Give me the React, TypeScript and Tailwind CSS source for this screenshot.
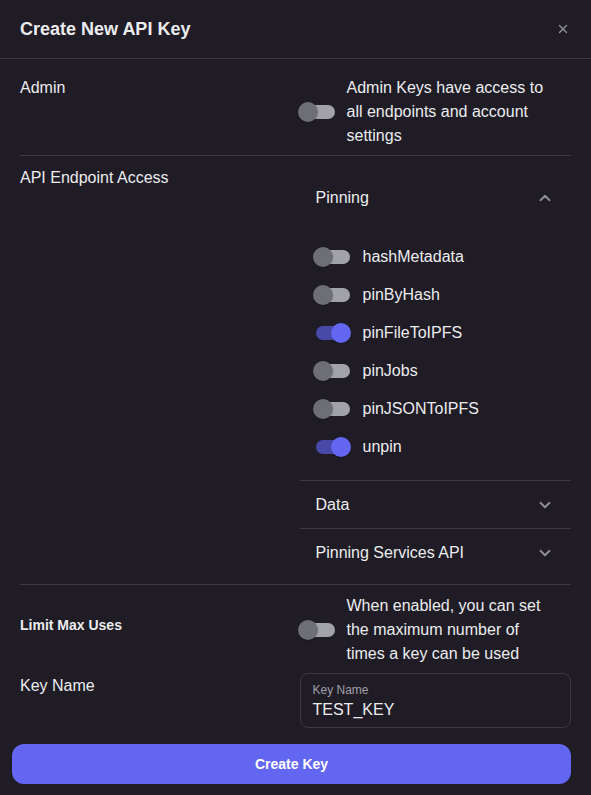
import { ChevronDown, ChevronUp, X } from 'lucide-react';

const endpoints = [
  { name: 'hashMetadata', on: false },
  { name: 'pinByHash', on: false },
  { name: 'pinFileToIPFS', on: true },
  { name: 'pinJobs', on: false },
  { name: 'pinJSONToIPFS', on: false },
  { name: 'unpin', on: true },
];

function Toggle({ on }: { on: boolean }) {
  return (
    <div className="relative h-5 w-[38px] shrink-0">
      <div
        className={`absolute left-[3px] top-[3px] h-[14px] w-[34px] rounded-full ${
          on ? 'bg-[#4949a9]' : 'bg-[#a2a3aa]'
        }`}
      />
      <div
        className={`absolute top-0 h-5 w-5 rounded-full shadow ${
          on ? 'left-[18px] bg-[#6366f1]' : 'left-0 bg-[#6e6f76]'
        }`}
      />
    </div>
  );
}

export default function App() {
  return (
    <div
      className="min-h-[795px] w-full bg-[#1f1c25] text-[#ececef]"
      style={{ fontFamily: '"Liberation Sans", Arial, sans-serif' }}
    >
      {/* header */}
      <div className="flex h-[59px] items-center justify-between border-b border-[#3a3843] px-5">
        <h2 className="text-[18px] font-bold">Create New API Key</h2>
        <X className="mr-[1px] h-[14px] w-[14px] text-[#8e8d97]" strokeWidth={2.5} />
      </div>

      <div className="px-5">
        {/* admin */}
        <div className="grid grid-cols-2 gap-2 border-b border-[#3a3843] pb-[7px] pt-[17px]">
          <div className="text-base leading-6">Admin</div>
          <div className="flex items-center">
            <div className="-ml-[2px]">
              <Toggle on={false} />
            </div>
            <p className="ml-[11px] w-[202px] text-base leading-6">
              Admin Keys have access to all endpoints and account settings
            </p>
          </div>
        </div>

        {/* endpoint access */}
        <div className="grid grid-cols-2 gap-2 border-b border-[#3a3843] pb-[7px] pt-[10px]">
          <div className="text-base leading-6">API Endpoint Access</div>
          <div>
            <div className="border-b border-[#3a3843]">
              <div className="flex h-16 items-center justify-between px-4">
                <span className="text-base">Pinning</span>
                <ChevronUp className="mr-[1px] h-[18px] w-[18px] text-[#8e8d97]" strokeWidth={2.5} />
              </div>
              <div className="px-4 pb-[14px] pt-2">
                {endpoints.map(ep => (
                  <div key={ep.name} className="flex h-[38px] items-center">
                    <div className="-ml-[3px]">
                      <Toggle on={ep.on} />
                    </div>
                    <span className="ml-[12px] text-base">{ep.name}</span>
                  </div>
                ))}
              </div>
            </div>
            <div className="flex h-12 items-center justify-between border-b border-[#3a3843] px-4">
              <span className="text-base">Data</span>
              <ChevronDown className="mr-[1px] h-[18px] w-[18px] text-[#8e8d97]" strokeWidth={2.5} />
            </div>
            <div className="flex h-12 items-center justify-between px-4">
              <span className="text-base">Pinning Services API</span>
              <ChevronDown className="mr-[1px] h-[18px] w-[18px] text-[#8e8d97]" strokeWidth={2.5} />
            </div>
          </div>
        </div>

        {/* limit max uses */}
        <div className="grid grid-cols-2 gap-2 pt-[9px]">
          <div className="flex items-center pb-[10px] text-sm font-bold">Limit Max Uses</div>
          <div className="flex items-center">
            <div className="-ml-[2px]">
              <Toggle on={false} />
            </div>
            <p className="ml-[11px] w-[202px] text-base leading-6">
              When enabled, you can set the maximum number of times a key can be used
            </p>
          </div>
        </div>

        {/* key name */}
        <div className="mt-[7px] grid grid-cols-2 gap-2">
          <div className="pt-[1px] text-base leading-6">Key Name</div>
          <div className="flex h-[55px] flex-col justify-center rounded-lg border border-[#3a3843] px-3">
            <span className="text-xs leading-4 text-[#a09fa8]">Key Name</span>
            <span className="mt-[2px] text-base leading-5">TEST_KEY</span>
          </div>
        </div>
      </div>

      <div className="px-3 pt-[16px]">
        <button className="h-10 w-[559px] rounded-xl bg-[#6366f1] text-sm font-bold text-white">
          Create Key
        </button>
      </div>
    </div>
  );
}
